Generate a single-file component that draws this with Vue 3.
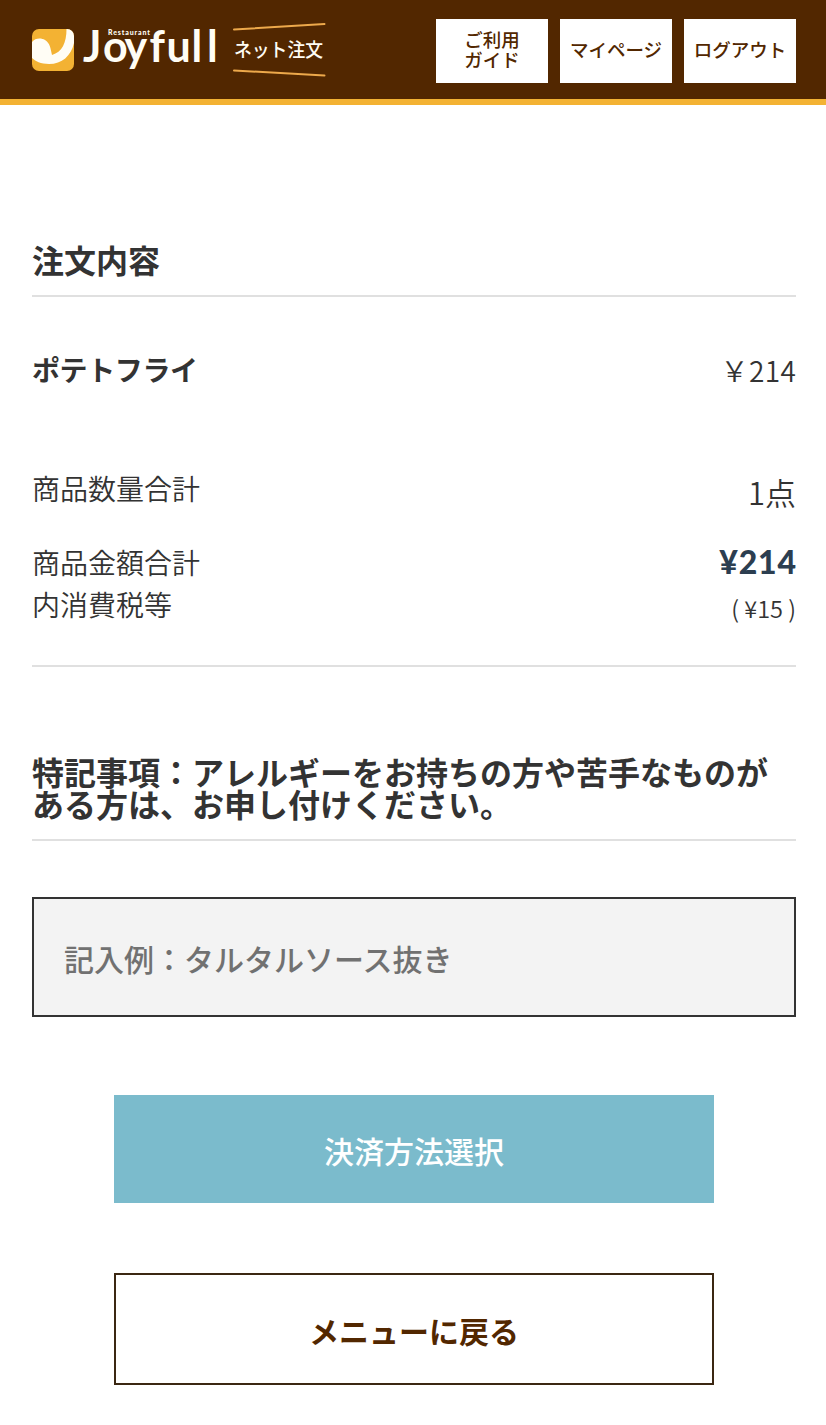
<template>
  <div class="page">
    <header class="header">
      <svg class="logo" width="300" height="64" viewBox="0 0 300 64" role="img" aria-label="Joyfull">
        <defs>
          <clipPath id="mark">
            <rect x="0" y="10" width="42" height="42" rx="7" />
          </clipPath>
        </defs>
        <g clip-path="url(#mark)">
          <rect x="0" y="10" width="42" height="42" fill="#f3b233" />
          <path
            d="M0 23C3 19 9 18.500 13 21C18 24 18.500 29 20 36C30 33 34.500 24 34.500 10H42V24C39 37 30 45 17 45C9 45 3 42 0 39Z"
            fill="#fffdf5"
          />
        </g>
        <text class="brand" x="51 71 92.500 117.500 134.500 159.500 175" y="43">Joyfull</text>
        <text class="brand-sub" x="76" y="16" textLength="42" lengthAdjust="spacing">Restaurant</text>
        <path d="M202 10.500L292.500 5M202 51.500L292.500 56.500" stroke="#eda94b" stroke-width="2" stroke-linecap="round" />
        <text class="service" x="202" y="38" textLength="89" lengthAdjust="spacingAndGlyphs">ネット注文</text>
      </svg>
      <nav class="nav">
        <a class="nav-link">ご利用<br />ガイド</a>
        <a class="nav-link">マイページ</a>
        <a class="nav-link">ログアウト</a>
      </nav>
    </header>

    <main class="content">
      <h2 class="title">注文内容</h2>
      <div class="row item">
        <span class="item-name">{{ order.name }}</span>
        <span class="price">￥{{ order.price }}</span>
      </div>
      <div class="row count">
        <span class="label">商品数量合計</span>
        <span class="count-value">{{ order.count }}点</span>
      </div>
      <div class="row">
        <span class="label">商品金額合計</span>
        <span class="total">¥{{ order.price }}</span>
      </div>
      <div class="row tax-row">
        <span class="label">内消費税等</span>
        <span class="tax">( ¥{{ order.tax }} )</span>
      </div>

      <h2 class="title note-title">特記事項：アレルギーをお持ちの方や苦手なものがある方は、お申し付けください。</h2>
      <input v-model="note" class="note" type="text" placeholder="記入例：タルタルソース抜き" />

      <div class="actions">
        <button type="button" class="btn primary">決済方法選択</button>
        <button type="button" class="btn back">メニューに戻る</button>
      </div>
    </main>
  </div>
</template>

<script setup>
import { ref } from "vue";

const order = { name: "ポテトフライ", price: 214, count: 1, tax: 15 };
const note = ref("");
</script>

<style>
body {
  background: #fff;
}
</style>

<style scoped>
.page {
  min-height: 1425px;
  color: #333;
  font-family: "Noto Sans CJK JP", sans-serif;
}

.header {
  display: flex;
  justify-content: space-between;
  align-items: flex-start;
  box-sizing: border-box;
  height: 105px;
  padding: 19px 30px 0 32px;
  background: #522700;
  border-bottom: 6px solid #f3b233;
}

.logo {
  display: block;
}

.brand {
  font: 700 43px Lato, sans-serif;
  fill: #fffdf5;
}

.brand-sub {
  font: 900 7px Lato, sans-serif;
  fill: #fffdf5;
}

.service {
  font: 500 19px "Noto Sans CJK JP", sans-serif;
  fill: #fffdf5;
}

.nav {
  display: flex;
  gap: 12px;
}

.nav-link {
  display: flex;
  justify-content: center;
  align-items: center;
  box-sizing: border-box;
  width: 112px;
  height: 64px;
  padding-bottom: 4px;
  background: #fff;
  color: #522700;
  font-size: 18.5px;
  font-weight: 500;
  line-height: 20px;
  white-space: nowrap;
}

.content {
  padding: 138px 30px 0 32px;
}

.title {
  margin: 0;
  padding-bottom: 20px;
  border-bottom: 2px solid #e0e0e0;
  font-size: 32px;
  font-weight: 700;
  line-height: 32px;
}

.row {
  display: flex;
  justify-content: space-between;
  height: 42px;
  font-size: 28px;
  font-weight: 350;
  line-height: 42px;
}

.item {
  margin: 51px 0 76px;
}

.item-name {
  font-weight: 700;
  letter-spacing: -0.4px;
}

.price {
  padding-top: 1px;
  letter-spacing: 0.5px;
  margin-right: -0.5px;
}

.label {
  padding-top: 1px;
}

.count {
  margin-bottom: 32px;
}

.count-value {
  padding-top: 5px;
  font-size: 31px;
}

.total {
  padding-top: 1px;
  color: #2c3e50;
  font: 900 32px/42px Lato, sans-serif;
  letter-spacing: 0.8px;
  margin-right: -0.8px;
}

.tax {
  padding-top: 5px;
  font-size: 23.5px;
}

.tax-row {
  padding-bottom: 41px;
  border-bottom: 2px solid #e0e0e0;
}

.note-title {
  margin-top: 88px;
}

.note {
  display: block;
  box-sizing: border-box;
  width: 100%;
  height: 120px;
  margin-top: 56px;
  padding: 2px 30px 0;
  border: 2px solid #333;
  border-radius: 0;
  background: #f3f3f3;
  font: 500 30px "Noto Sans CJK JP", sans-serif;
}

.note::placeholder {
  color: #717171;
}

.actions {
  display: flex;
  flex-direction: column;
  align-items: center;
  gap: 70px;
  margin-top: 78px;
}

.btn {
  box-sizing: border-box;
  width: 600px;
  height: 108px;
  padding: 1px 0 0;
  border: none;
  font: 500 30px "Noto Sans CJK JP", sans-serif;
}

.primary {
  background: #7bbbcc;
  color: #fff;
}

.back {
  height: 112px;
  border: 2px solid #3b2712;
  background: #fff;
  color: #522700;
  font-weight: 700;
}
</style>
